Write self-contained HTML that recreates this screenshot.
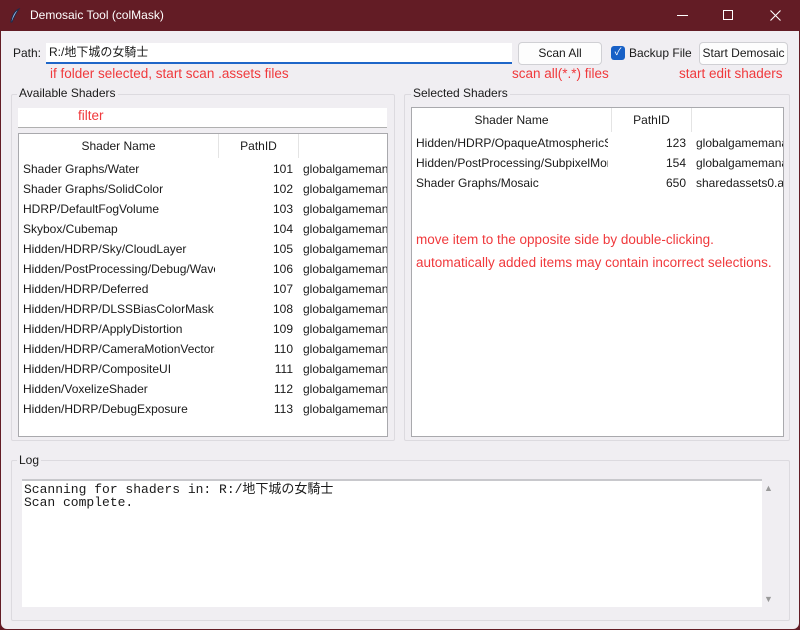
<!DOCTYPE html>
<html><head><meta charset="utf-8">
<style>
*{margin:0;padding:0;box-sizing:border-box}
body{width:800px;height:630px;background:#631c25;font-family:"Liberation Sans","Noto Sans CJK JP",sans-serif;font-size:12px;color:#1a1a1a;position:relative;overflow:hidden}
.a{position:absolute;white-space:nowrap}
#win{position:absolute;left:1px;top:31px;width:798px;height:598px;background:#f0eef2;border-radius:0 0 6px 6px}
.red{color:#f0393c;font-size:13.5px}
.frame{position:absolute;border:1px solid #dcdadf;border-radius:2px}
.lbl{position:absolute;background:#f0eef2;padding:0 2px;font-size:12px}
.box{position:absolute;background:#fff;border:1px solid #a9a9ad;overflow:hidden}
.hd{position:absolute;top:0;height:24px;line-height:24px;text-align:center;border-right:1px solid #e4e4e4}
.r{position:absolute;height:20px;line-height:20px;left:0;right:0}
.r span{position:absolute;overflow:hidden}
.btn{position:absolute;background:#fdfdfd;border:1px solid #d0d0d4;border-radius:4px;text-align:center;line-height:20px}
</style></head><body>
<svg class="a" style="left:9px;top:8px" width="12" height="16" viewBox="0 0 12 16"><path d="M10 1 C5 3 3 8 2 14 L3 14 C5 9 7 5 10 1Z" fill="#9ab8e8" stroke="#1d2a4a" stroke-width="1"/></svg>
<div class="a" style="left:30px;top:8px;color:#fff;font-size:12px">Demosaic Tool (colMask)</div>
<div class="a" style="left:677px;top:15px;width:11px;height:1px;background:#fff"></div>
<div class="a" style="left:723px;top:10px;width:10px;height:10px;border:1px solid #fff"></div>
<svg class="a" style="left:770px;top:10px" width="11" height="11" viewBox="0 0 11 11"><path d="M0.5 0.5L10.5 10.5M10.5 0.5L0.5 10.5" stroke="#fff" stroke-width="1.1"/></svg>
<div id="win"></div>

<div class="a" style="left:13px;top:46px">Path:</div>
<div class="a" style="left:46px;top:43px;width:466px;height:21px;background:#fff;border-bottom:2px solid #1e66c8;padding-left:3px;line-height:19px">R:/地下城の女騎士</div>
<div class="a red" style="left:50px;top:66px">if folder selected, start scan .assets files</div>
<div class="btn" style="left:518px;top:42px;width:84px;height:23px">Scan All</div>
<div class="a" style="left:611px;top:46px;width:14px;height:14px;background:#1760c6;border-radius:3px;color:#fff;font-size:10px;line-height:14px;text-align:center">✓</div>
<div class="a" style="left:629px;top:46px">Backup File</div>
<div class="btn" style="left:699px;top:42px;width:89px;height:23px">Start Demosaic</div>
<div class="a red" style="left:512px;top:66px">scan all(*.*) files</div>
<div class="a red" style="left:679px;top:66px">start edit shaders</div>

<div class="frame" style="left:11px;top:94px;width:384px;height:347px"></div>
<div class="lbl" style="left:17px;top:86px">Available Shaders</div>
<div class="a" style="left:18px;top:108px;width:369px;height:20px;background:#fff;border-bottom:1px solid #b0b0b0"></div>
<div class="a red" style="left:78px;top:108px">filter</div>
<div class="box" style="left:18px;top:133px;width:370px;height:304px">
<div class="hd" style="left:0;width:200px">Shader Name</div>
<div class="hd" style="left:200px;width:80px">PathID</div>
<div id="L"></div>
</div>

<div class="frame" style="left:404px;top:94px;width:386px;height:347px"></div>
<div class="lbl" style="left:411px;top:86px">Selected Shaders</div>
<div class="box" style="left:411px;top:107px;width:373px;height:330px">
<div class="hd" style="left:0;width:200px">Shader Name</div>
<div class="hd" style="left:200px;width:80px">PathID</div>
<div id="R"></div>
</div>
<div class="a red" style="left:416px;top:232px">move item to the opposite side by double-clicking.</div>
<div class="a red" style="left:416px;top:255px">automatically added items may contain incorrect selections.</div>

<div class="frame" style="left:11px;top:460px;width:779px;height:161px"></div>
<div class="lbl" style="left:17px;top:453px">Log</div>
<div class="a" style="left:22px;top:479px;width:740px;height:128px;background:#fff;border-top:2px solid #c8c8cc;font-family:'Liberation Mono','Noto Sans CJK JP',monospace;font-size:13px;line-height:13px;padding:2px 0 0 2px;white-space:pre">Scanning for shaders in: R:/地下城の女騎士
Scan complete.</div>
<div class="a" style="left:764px;top:483px;color:#999;font-size:9px">▲</div>
<div class="a" style="left:764px;top:594px;color:#999;font-size:9px">▼</div>

<script>
function rows(id,data,top){var h='';data.forEach(function(d,i){h+='<div class="r" style="top:'+(top+i*20)+'px"><span style="left:4px;width:192px">'+d[0]+'</span><span style="left:200px;width:74px;text-align:right">'+d[1]+'</span><span style="left:284px;width:120px">'+d[2]+'</span></div>';});document.getElementById(id).innerHTML=h;}
var g='globalgamemanagers';
rows('L',[["Shader Graphs/Water",101,g],["Shader Graphs/SolidColor",102,g],["HDRP/DefaultFogVolume",103,g],["Skybox/Cubemap",104,g],["Hidden/HDRP/Sky/CloudLayer",105,g],["Hidden/PostProcessing/Debug/Waveform",106,g],["Hidden/HDRP/Deferred",107,g],["Hidden/HDRP/DLSSBiasColorMask",108,g],["Hidden/HDRP/ApplyDistortion",109,g],["Hidden/HDRP/CameraMotionVectors",110,g],["Hidden/HDRP/CompositeUI",111,g],["Hidden/VoxelizeShader",112,g],["Hidden/HDRP/DebugExposure",113,g]],25);
rows('R',[["Hidden/HDRP/OpaqueAtmosphericScattering",123,g],["Hidden/PostProcessing/SubpixelMorphological",154,g],["Shader Graphs/Mosaic",650,"sharedassets0.assets"]],25);
</script>
</body></html>
